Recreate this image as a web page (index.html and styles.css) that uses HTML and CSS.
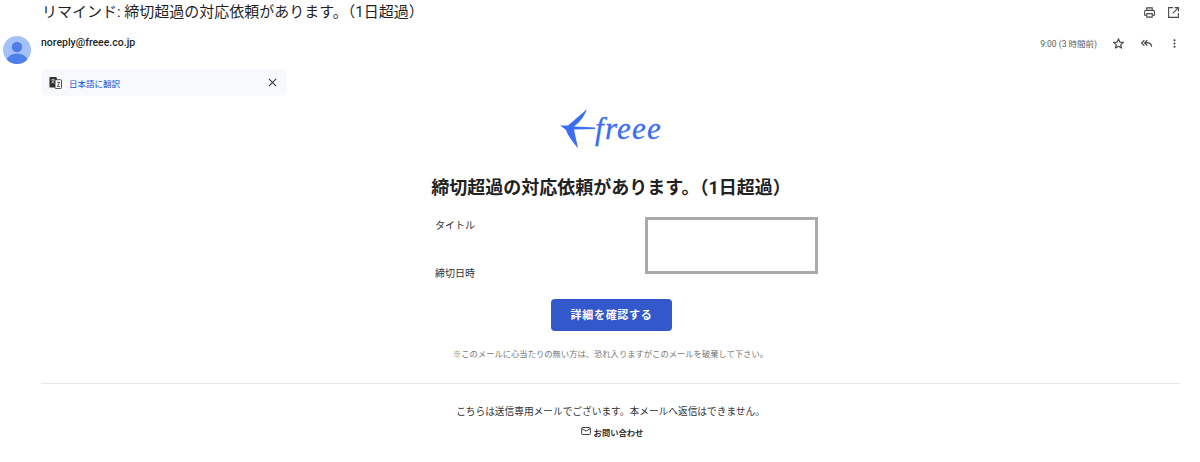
FILE: index.html
```html
<!DOCTYPE html>
<html lang="ja">
<head>
    <meta charset="UTF-8">
    <title>リマインド</title>
    <link rel="stylesheet" href="styles.css">
</head>
<body>
    <div class="subject-row">
        <h1 class="subject">リマインド: 締切超過の対応依頼があります。（1日超過）</h1>
        <div class="subject-icons">
            <svg class="icon" viewBox="0 0 24 24"><path d="M7 8V3.500h10V8M7 17H3v-6.500a2.500 2.500 0 0 1 2.500-2.500h13a2.500 2.500 0 0 1 2.500 2.500V17H17M7 14h10v6.500H7z" fill="none" stroke="#444746" stroke-width="2"/></svg>
            <svg class="icon" viewBox="0 0 24 24"><path d="M11 3H3v18h18v-8M14 3h7v7M21 3L10.500 13.500" fill="none" stroke="#444746" stroke-width="2"/></svg>
        </div>
    </div>

    <div class="sender-row">
        <svg class="avatar" viewBox="0 0 28 28"><defs><clipPath id="round"><circle cx="14" cy="14" r="14"/></clipPath></defs><g clip-path="url(#round)"><rect width="28" height="28" fill="#a4c1fb"/><circle cx="14" cy="11" r="5.200" fill="#4f7fe6"/><ellipse cx="14" cy="24" rx="10" ry="6.500" fill="#4f7fe6"/></g></svg>
        <div class="sender">noreply@freee.co.jp</div>
        <div class="meta">
            <span class="time">9:00 (3 時間前)</span>
            <svg class="icon star" viewBox="0 0 24 24"><path d="M12 3.500l2.500 5.800 6.500.6-4.900 4.200 1.500 6.300L12 17.100l-5.600 3.300 1.500-6.300L3 9.900l6.500-.6z" fill="none" stroke="#444746" stroke-width="2.200" stroke-linejoin="round"/></svg>
            <svg class="icon reply" viewBox="0 0 24 24"><path d="M8 6L3 11l5 5M13.500 6l-5 5 5 5M9 11h6c3.500 0 6 2.500 6.500 7" fill="none" stroke="#444746" stroke-width="2.200"/></svg>
            <svg class="icon more" viewBox="0 0 24 24"><circle cx="12" cy="6" r="2" fill="#444746"/><circle cx="12" cy="12" r="2" fill="#444746"/><circle cx="12" cy="18" r="2" fill="#444746"/></svg>
        </div>
    </div>

    <div class="translate-bar">
        <svg class="translate-icon" viewBox="0 0 14 14"><path d="M1.500 1h6.500l3 11.500H1.500a1 1 0 0 1-1-1V2a1 1 0 0 1 1-1z" fill="#303030"/><rect x="6.500" y="4" width="7" height="9.500" rx="1" fill="#fff" stroke="#303030" stroke-width=".9"/><path d="M2.300 4.200h4M4.300 3v1.200M2.800 8l2.700-3.500M3.300 5.500L5.800 8" fill="none" stroke="#fff" stroke-width=".7"/><path d="M8.500 6.800h3L9 11.200h3" fill="none" stroke="#303030" stroke-width=".9"/></svg>
        <a class="translate-link">日本語に翻訳</a>
        <svg class="translate-close" viewBox="0 0 10 10"><path d="M1 1l8 8M9 1l-8 8" fill="none" stroke="#3c3c3c" stroke-width="1.300"/></svg>
    </div>

    <div class="mail-body">
        <div class="logo">
            <svg class="bird" viewBox="0 0 36 41"><path d="M1 17.500L9 17.500C16 11 23 6 28 1C25 9 21 14 15 18.500L36 19.500L36 21L15 21.500C16 28 18 34 19 40.500C14 34 9 28 7 22C5 20 3 18.500 1 17.500z" fill="#3a6cf4"/></svg>
            <span class="wordmark">freee</span>
        </div>
        <h2 class="heading">締切超過の対応依頼があります。（1日超過）</h2>
        <div class="details">
            <div class="labels">
                <div class="label">タイトル</div>
                <div class="label">締切日時</div>
            </div>
            <div class="redacted"></div>
        </div>
        <a class="confirm-btn">詳細を確認する</a>
        <p class="notice">※このメールに心当たりの無い方は、恐れ入りますがこのメールを破棄して下さい。</p>
        <hr class="divider">
        <p class="no-reply">こちらは送信専用メールでございます。本メールへ返信はできません。</p>
        <div class="contact">
            <svg class="mail-icon" viewBox="0 0 12 10"><rect x=".6" y=".6" width="10.800" height="8.800" rx="1" fill="none" stroke="#333" stroke-width="1.200"/><path d="M1 2l5 3.200L11 2" fill="none" stroke="#333" stroke-width="1.200"/></svg>
            <span>お問い合わせ</span>
        </div>
    </div>
</body>
</html>
```

FILE: styles.css
```css
* {
    box-sizing: border-box;
}
html, body {
    height: 462px;
    overflow: hidden;
}
body {
    margin: 0;
    background: #fff;
    color: #222;
    font-family: "Roboto", "Noto Sans CJK JP", sans-serif;
}
.subject-row {
    display: flex;
    align-items: center;
    justify-content: space-between;
    height: 24px;
    padding: 0 20px 0 42px;
}
.subject {
    margin: 0;
    font-size: 15px;
    font-weight: 400;
    line-height: 24px;
    color: #1f1f1f;
}
.subject-icons {
    display: flex;
    gap: 11px;
}
.icon {
    width: 13px;
    height: 13px;
    display: block;
}
.sender-row {
    display: flex;
    height: 33px;
    margin-top: 12px;
    padding-left: 3px;
    padding-right: 19px;
}
.avatar {
    width: 28px;
    height: 28px;
}
.sender {
    margin-left: 10px;
    font-size: 10.500px;
    font-weight: 500;
    line-height: 14px;
    color: #1f1f1f;
}
.meta {
    margin-left: auto;
    display: flex;
    align-items: center;
    height: 14px;
}
.time {
    font-size: 8.500px;
    color: #5e5e5e;
    margin-left: 1px;
    margin-right: 15px;
}
.star {
    margin-right: 15px;
}
.reply {
    margin-right: 15px;
}
.translate-bar {
    display: flex;
    align-items: center;
    width: 246px;
    height: 27px;
    margin-left: 41px;
    padding: 0 10px 0 8px;
    background: #f7f9fd;
    border-radius: 5px;
}
.translate-icon {
    width: 13px;
    height: 13px;
}
.translate-link {
    margin-left: 7px;
    font-size: 8.500px;
    color: #0b57d0;
}
.translate-close {
    margin-left: auto;
    width: 9px;
    height: 9px;
}
.mail-body {
    display: flex;
    flex-direction: column;
    align-items: center;
    margin: 12px 20px 0 41px;
}
.logo {
    display: flex;
    align-items: center;
    height: 41px;
    margin-left: 0;
}
.bird {
    width: 36px;
    height: 41px;
}
.wordmark {
    margin-left: 0;
    font-family: "Liberation Serif", serif;
    font-style: italic;
    font-size: 31px;
    line-height: 40px;
    letter-spacing: 1.200px;
    color: #3a6cf4;
    -webkit-text-stroke: .3px #3a6cf4;
}
.heading {
    margin: 26px 0 0 1px;
    font-size: 18px;
    font-weight: 700;
    line-height: 26px;
    color: #222;
}
.details {
    display: flex;
    width: 383px;
    height: 64px;
    margin-top: 16px;
    margin-left: 32px;
    justify-content: space-between;
}
.labels {
    display: flex;
    flex-direction: column;
    gap: 32px;
    padding-top: 1px;
}
.label {
    font-size: 10px;
    line-height: 16px;
    color: #333;
}
.redacted {
    width: 173px;
    height: 57px;
    border: 3px solid #aaaaab;
}
.confirm-btn {
    display: flex;
    align-items: center;
    justify-content: center;
    width: 121px;
    height: 32px;
    margin-top: 18px;
    margin-left: 2px;
    padding-bottom: 2px;
    background: #3358cc;
    border-radius: 4px;
    color: #fff;
    font-size: 11px;
    font-weight: 700;
    letter-spacing: .7px;
}
.notice {
    margin: 16px 0 0;
    font-size: 8.300px;
    line-height: 14px;
    color: #777;
}
.divider {
    width: 100%;
    height: 1px;
    margin: 22px 0 0;
    border: 0;
    background: #e8e8e8;
}
.no-reply {
    margin: 21px 0 0;
    font-size: 9.700px;
    line-height: 14px;
    color: #333;
}
.contact {
    display: flex;
    align-items: center;
    margin-top: 7px;
    margin-left: 3px;
    font-size: 8.300px;
    font-weight: 700;
    color: #333;
}
.mail-icon {
    width: 10px;
    height: 8px;
    margin-right: 3px;
    margin-bottom: 3px;
}
```
